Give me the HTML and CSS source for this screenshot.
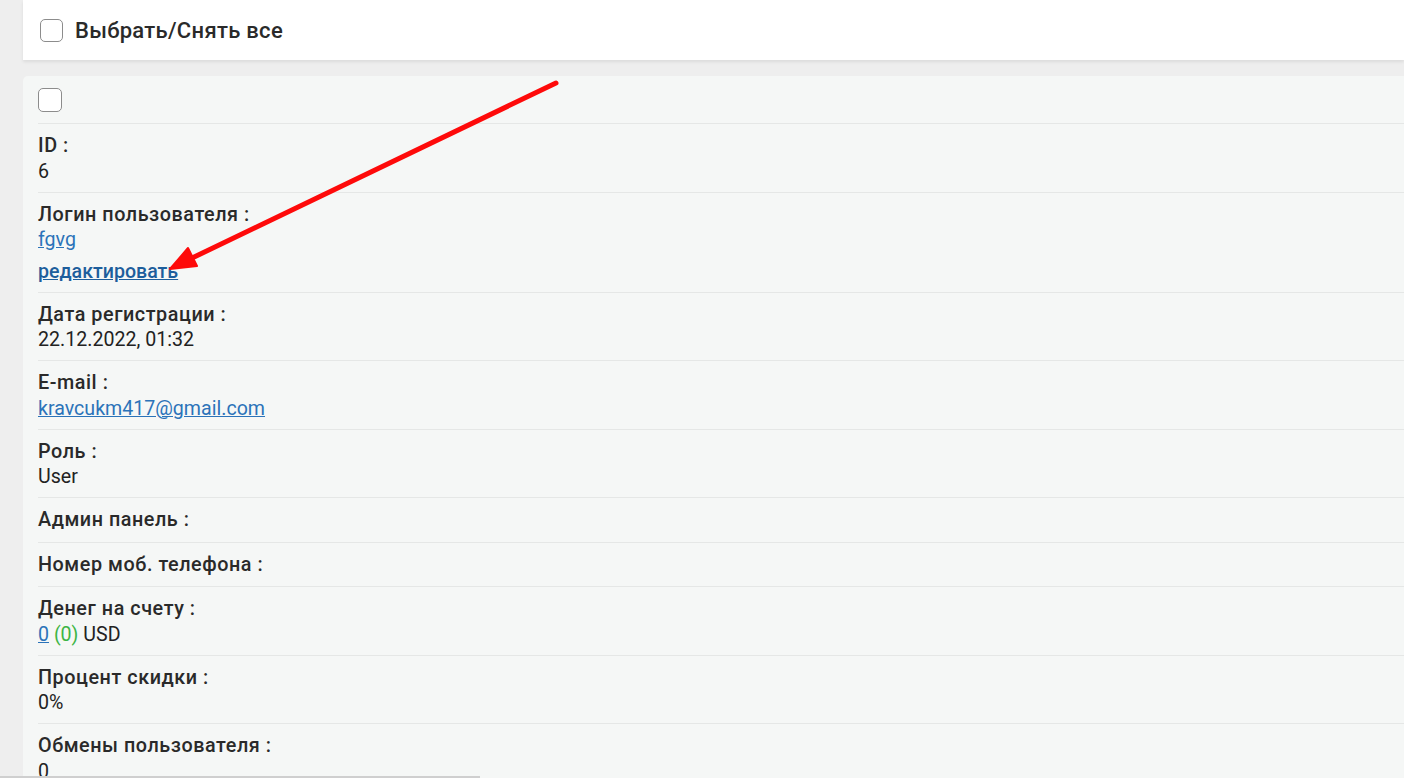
FILE: index.html
```html
<!DOCTYPE html>
<html lang="ru">
<head>
<meta charset="utf-8">
<title>Пользователи</title>
<link rel="stylesheet" href="styles.css">
</head>
<body>
<div class="page">
  <div class="select-bar">
    <label class="select-all"><span class="box"></span><span>Выбрать/Снять все</span></label>
  </div>
  <div class="card">
    <div class="row row-check"><span class="box box-sm"></span></div>
    <div class="row"><div class="label">ID :</div><div class="value">6</div></div>
    <div class="row"><div class="label">Логин пользователя :</div><div class="value"><a href="#" class="link">fgvg</a></div><div class="value edit"><a href="#" class="link link-edit">редактировать</a></div></div>
    <div class="row"><div class="label">Дата регистрации :</div><div class="value">22.12.2022, 01:32</div></div>
    <div class="row"><div class="label">E-mail :</div><div class="value"><a href="#" class="link">kravcukm417@gmail.com</a></div></div>
    <div class="row"><div class="label">Роль :</div><div class="value">User</div></div>
    <div class="row"><div class="label">Админ панель :</div></div>
    <div class="row"><div class="label">Номер моб. телефона :</div></div>
    <div class="row"><div class="label">Денег на счету :</div><div class="value"><a href="#" class="link">0</a> <span class="green">(0)</span> USD</div></div>
    <div class="row"><div class="label">Процент скидки :</div><div class="value">0%</div></div>
    <div class="row"><div class="label">Обмены пользователя :</div><div class="value">0</div></div>
  </div>
</div>
<svg class="arrow" width="600" height="300" viewBox="0 0 600 300">
  <line x1="556" y1="83" x2="190" y2="259" stroke="#fe0a0a" stroke-width="5" stroke-linecap="round"/>
  <polygon points="170,269 188,248 197,266" fill="#fe0a0a" stroke="#fe0a0a" stroke-width="2" stroke-linejoin="round"/>
</svg>
<div class="hscroll"></div>
</body>
</html>
```
FILE: styles.css
```css
html, body {
  margin: 0;
  padding: 0;
  background: #eeeeee;
  overflow: hidden;
  height: 778px;
}
body {
  font-family: Roboto, "Liberation Sans", Arial, sans-serif;
  color: #252525;
}
.page {
  padding-left: 23px;
}
.select-bar {
  background: #ffffff;
  height: 60px;
  box-shadow: 0 2px 3px rgba(0, 0, 0, 0.08);
  display: flex;
  align-items: center;
  padding-left: 17px;
}
.select-all {
  display: flex;
  align-items: center;
  gap: 12px;
  font-size: 22px;
  font-weight: 500;
  letter-spacing: 0.3px;
  color: #2a2a2a;
}
.box {
  display: inline-block;
  width: 21px;
  height: 21px;
  border: 1px solid #8c8c8c;
  border-radius: 5px;
  background: #fff;
  box-sizing: content-box;
}
.card {
  margin-top: 16px;
  background: #f5f7f6;
  border-top-left-radius: 5px;
  padding-left: 15px;
  min-height: 720px;
}
.row {
  border-top: 1px solid #e5e7e6;
  padding: 8px 0;
  font-size: 19.6px;
}
.row:first-child {
  border-top: none;
}
.row-check {
  padding: 12px 0 11px;
  display: flex;
}
.box-sm {
  width: 22px;
  height: 22px;
}
.label {
  font-weight: 500;
  line-height: 27.5px;
  font-size: 19.8px;
  letter-spacing: 0.55px;
  color: #2a2a2a;
}
.value {
  line-height: 24px;
  color: #222;
}
.edit {
  margin-top: 7.5px;
}
.link {
  color: #2b73b9;
  text-decoration: underline;
}
.link-edit {
  color: #1d5e9c;
  font-weight: 500;
}
.green {
  color: #3db545;
}
.arrow {
  position: absolute;
  left: 0;
  top: 0;
  pointer-events: none;
}
.hscroll {
  position: fixed;
  left: 0;
  bottom: 0;
  width: 480px;
  height: 2px;
  background: #cfcfcf;
}
```
